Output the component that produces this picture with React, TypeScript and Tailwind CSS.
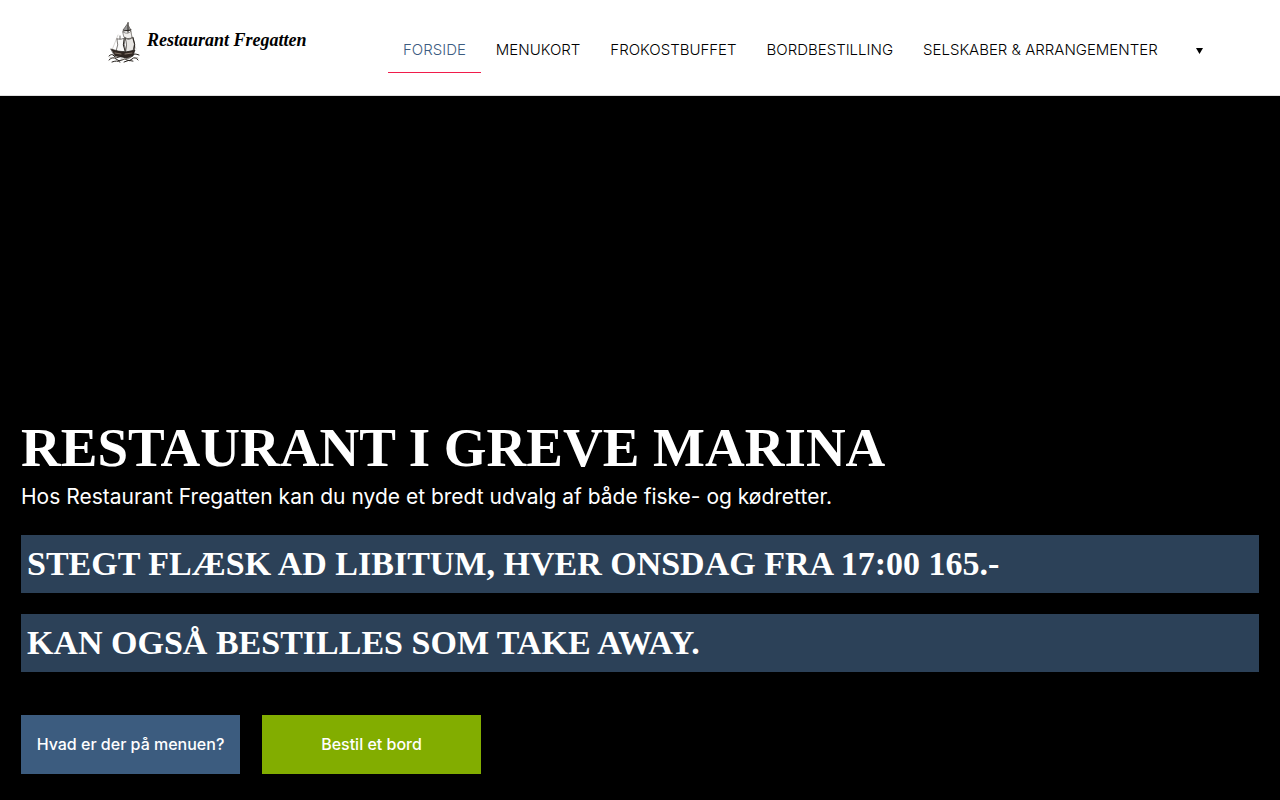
import React from "react";

type NavItem = { label: string; href: string; active?: boolean };

const navItems: NavItem[] = [
  { label: "Forside", href: "#forside", active: true },
  { label: "Menukort", href: "#menukort" },
  { label: "Frokostbuffet", href: "#frokostbuffet" },
  { label: "Bordbestilling", href: "#bordbestilling" },
  { label: "Selskaber & Arrangementer", href: "#selskaber" },
];

const offers = [
  "Stegt flæsk ad libitum, hver onsdag fra 17:00 165.-",
  "Kan også bestilles som take away.",
];

function ShipIcon() {
  return (
    <svg viewBox="0 0 32 42" className="h-[42px] w-8 shrink-0" fill="none" stroke="#27221e" strokeLinecap="round" aria-hidden="true">
      <path d="M20 0v30M12 14v16" strokeWidth=".7" />
      <path d="M20 1l-5 7 5 1zM20 3l3 5-3 1z" fill="#999" strokeWidth=".5" />
      <path d="M15 10q5 3 8-1l1 7q-5 2-8-1z" fill="#f1efed" strokeWidth=".5" />
      <path d="M17 16q4 3 8-1 3 7 0 14l-8 1q3-7 0-14z" fill="#e8e6e3" strokeWidth=".7" />
      <path d="M9 17q4 1 8-1-2 7 1 13-5 2-10 0 3-6 1-12z" fill="#fafaf9" strokeWidth=".6" />
      <path d="M10 13l-6 15M20 2l8 25" stroke="#99948e" strokeWidth=".4" />
      <path d="M16 17q-2 6 1 12M25 16q3 6 1 13M15 9l8-1" strokeWidth="1" />
      <path d="M3 27l7 2 8 1 9-2-2 6-6 2-12-2z" fill="#302621" strokeWidth=".6" />
      <path d="M7 31l6 1M17 32l7-1" stroke="#ad9d8e" strokeWidth=".7" />
      <path d="M1 34q3-3 5 0t5 1 5 0 5 1 4-3 6 0M1 38q4-4 7-1t6 1 5 0 5-1 6 1M4 40q5-2 8 0M16 40q5-3 9-1" strokeWidth="1" />
      <path d="M2 36q4 1 7-1M13 37q6 1 10-2M26 36q3-1 4 0" stroke="#8d8780" strokeWidth=".8" />
    </svg>
  );
}

function Header() {
  return (
    <header className="flex min-h-24 items-start border-b border-[#e0e0e0] bg-white pl-[108px]">
      <a href="#forside" className="mt-[22px] flex w-[280px] shrink-0 items-start gap-[7px] text-black">
        <ShipIcon />
        <span className="mt-[5px] whitespace-nowrap font-['Liberation_Serif',serif] text-lg font-bold italic leading-[26px]">
          Restaurant Fregatten
        </span>
      </a>
      <nav aria-label="Hovedmenu" className="mt-7 flex">
        {navItems.map((item) => (
          <a
            key={item.label}
            href={item.href}
            aria-current={item.active ? "page" : undefined}
            className={
              item.active
                ? "whitespace-nowrap border-b border-[#f01c4b] px-[15px] text-[15px] font-light leading-[44px] text-[#3c5c7f] uppercase"
                : "whitespace-nowrap border-b border-transparent px-[15px] text-[15px] font-light leading-[44px] text-black uppercase"
            }
          >
            {item.label}
          </a>
        ))}
        <button type="button" aria-label="Flere sider" className="flex h-[45px] items-center px-[23px]">
          <svg viewBox="0 0 7 6" className="h-1.5 w-[7px]" aria-hidden="true">
            <path d="M0 0h7L3.500 6z" fill="#000" />
          </svg>
        </button>
      </nav>
    </header>
  );
}

export default function App() {
  return (
    <div className="flex min-h-screen flex-col bg-black font-['Inter',sans-serif]">
      <Header />
      <main className="flex grow flex-col justify-end px-[21px] pb-[26px] text-white">
        <h1 className="font-['Liberation_Serif',serif] text-[55px] font-bold leading-[70px] uppercase">
          Restaurant i Greve Marina
        </h1>
        <p className="text-[21px] leading-7">
          Hos Restaurant Fregatten kan du nyde et bredt udvalg af både fiske- og kødretter.
        </p>
        <div className="mt-6 flex flex-col gap-[21px]">
          {offers.map((offer) => (
            <h2
              key={offer}
              className="bg-[#2c4158] px-[6px] font-['Liberation_Serif',serif] text-[34px] font-bold leading-[58px] uppercase"
            >
              {offer}
            </h2>
          ))}
        </div>
        <div className="mt-[43px] flex gap-[22px] text-base font-medium">
          <a href="#menukort" className="w-[219px] bg-[#3c5c7f] text-center leading-[59px]">
            Hvad er der på menuen?
          </a>
          <a href="#bordbestilling" className="w-[219px] bg-[#82ad00] text-center leading-[59px]">
            Bestil et bord
          </a>
        </div>
      </main>
    </div>
  );
}
